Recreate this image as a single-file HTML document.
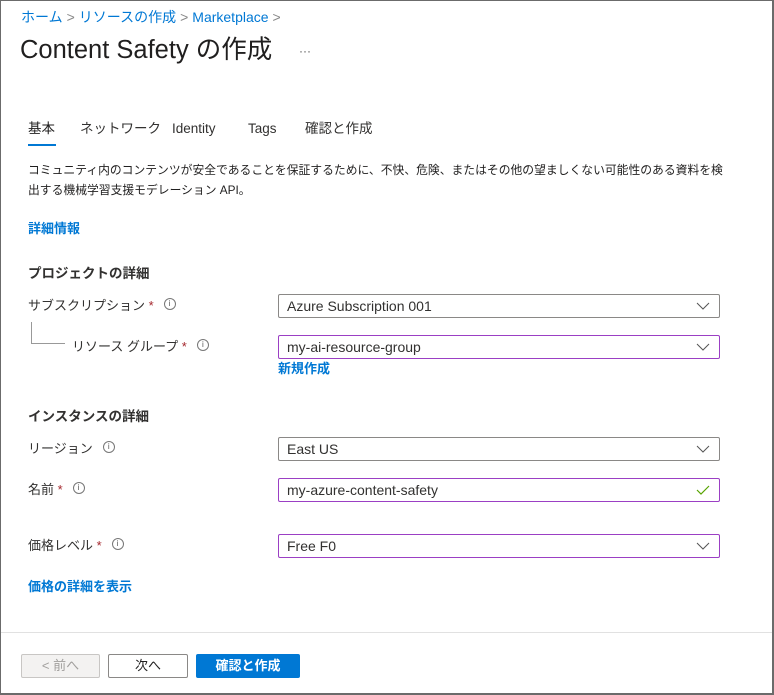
<!DOCTYPE html>
<html><head><meta charset="utf-8"><style>
*{box-sizing:border-box;margin:0;padding:0}
body{width:774px;height:695px;overflow:hidden;background:#fff;font-family:"Liberation Sans","Noto Sans CJK JP",sans-serif;color:#323130;position:relative}
.frame{position:absolute;left:0;top:0;width:774px;height:695px;border:1px solid #6b6b6b;border-right:2px solid #6b6b6b;border-bottom:2px solid #6b6b6b}
.a{position:absolute;white-space:nowrap;line-height:18px}
.link{color:#0078d4}
.bc{font-size:14px;top:8px;left:21px}
.bc span.s{color:#888;margin:0 4px}
h1{position:absolute;left:20px;top:33px;font-size:25.5px;line-height:34px;font-weight:400;color:#201f1f}
.tab{font-size:13.5px;top:120px}
.lbl{font-size:13px;color:#323130}
.st{color:#a4262c}
.i{display:inline-block;width:12px;height:12px;border:1px solid #777;border-radius:50%;font-size:8px;text-align:center;line-height:10px;color:#555;margin-left:10px;position:relative;top:-3px;vertical-align:middle}
.inp{position:absolute;left:278px;width:442px;height:24px;border:1px solid #8a8886;border-radius:2px;font-size:14px;padding:3px 8px;line-height:16px;color:#323130}
.inp.p{border-color:#9b3fc4}
.chev{position:absolute;right:9px;top:6px}
.sec{font-size:13.5px;font-weight:700;color:#323130}
.btn{position:absolute;top:654px;height:24px;font-size:13px;text-align:center;line-height:22px;border-radius:2px}
</style></head><body>
<div class="a bc"><span class="link">ホーム</span><span class="s">&gt;</span><span class="link">リソースの作成</span><span class="s">&gt;</span><span class="link">Marketplace</span><span class="s">&gt;</span></div>
<h1>Content Safety の作成</h1>
<div class="a" style="left:299px;top:42px;font-size:12px;color:#555">···</div>
<div class="a tab" style="left:28px;color:#201f1f">基本</div>
<div class="a" style="left:28px;top:144px;width:28px;height:2px;background:#0078d4"></div>
<div class="a tab" style="left:80px">ネットワーク</div>
<div class="a tab" style="left:172px">Identity</div>
<div class="a tab" style="left:248px">Tags</div>
<div class="a tab" style="left:305px">確認と作成</div>
<div class="a" style="left:28px;top:160px;font-size:11.8px;line-height:20px;white-space:normal;width:700px;color:#201f1f">コミュニティ内のコンテンツが安全であることを保証するために、不快、危険、またはその他の望ましくない可能性のある資料を検出する機械学習支援モデレーション API。</div>
<div class="a link" style="left:28px;top:220px;font-size:13px;font-weight:700">詳細情報</div>
<div class="a sec" style="left:28px;top:265px">プロジェクトの詳細</div>
<div class="a lbl" style="left:28px;top:297px">サブスクリプション <span class="st">*</span><span class="i">i</span></div>
<div class="a" style="left:31px;top:322px;width:34px;height:22px;border-left:1px solid #999;border-bottom:1px solid #999"></div>
<div class="a lbl" style="left:72px;top:338px">リソース グループ <span class="st">*</span><span class="i">i</span></div>
<div class="a link" style="left:278px;top:360px;font-size:13px;font-weight:700">新規作成</div>
<div class="a sec" style="left:28px;top:408px">インスタンスの詳細</div>
<div class="a lbl" style="left:28px;top:440px">リージョン<span class="i">i</span></div>
<div class="a lbl" style="left:28px;top:481px">名前 <span class="st">*</span><span class="i">i</span></div>
<div class="a lbl" style="left:28px;top:537px">価格レベル <span class="st">*</span><span class="i">i</span></div>
<div class="a link" style="left:28px;top:578px;font-size:13px;font-weight:700">価格の詳細を表示</div>
<div class="inp" style="top:294px">Azure Subscription 001<svg class="chev" width="14" height="10"><path d="M1 2l6 6 6-6" fill="none" stroke="#555" stroke-width="1"/></svg></div>
<div class="inp p" style="top:335px">my-ai-resource-group<svg class="chev" width="14" height="10"><path d="M1 2l6 6 6-6" fill="none" stroke="#555" stroke-width="1"/></svg></div>
<div class="inp" style="top:437px">East US<svg class="chev" width="14" height="10"><path d="M1 2l6 6 6-6" fill="none" stroke="#555" stroke-width="1"/></svg></div>
<div class="inp p" style="top:478px">my-azure-content-safety<svg class="chev" width="14" height="10"><path d="M1 5l4 4 8-8" fill="none" stroke="#57a300" stroke-width="1.2"/></svg></div>
<div class="inp p" style="top:534px">Free F0<svg class="chev" width="14" height="10"><path d="M1 2l6 6 6-6" fill="none" stroke="#555" stroke-width="1"/></svg></div>
<div class="a" style="left:1px;top:632px;width:771px;height:1px;background:#e1e1e1"></div>
<div class="btn" style="left:21px;width:79px;background:#f3f2f1;border:1px solid #c8c6c4;color:#a19f9d">&lt; 前へ</div>
<div class="btn" style="left:108px;width:80px;border:1px solid #8a8886;color:#201f1f">次へ</div>
<div class="btn" style="left:196px;width:104px;background:#0078d4;color:#fff;font-weight:700;line-height:24px">確認と作成</div>
<div class="frame"></div>
</body></html>
